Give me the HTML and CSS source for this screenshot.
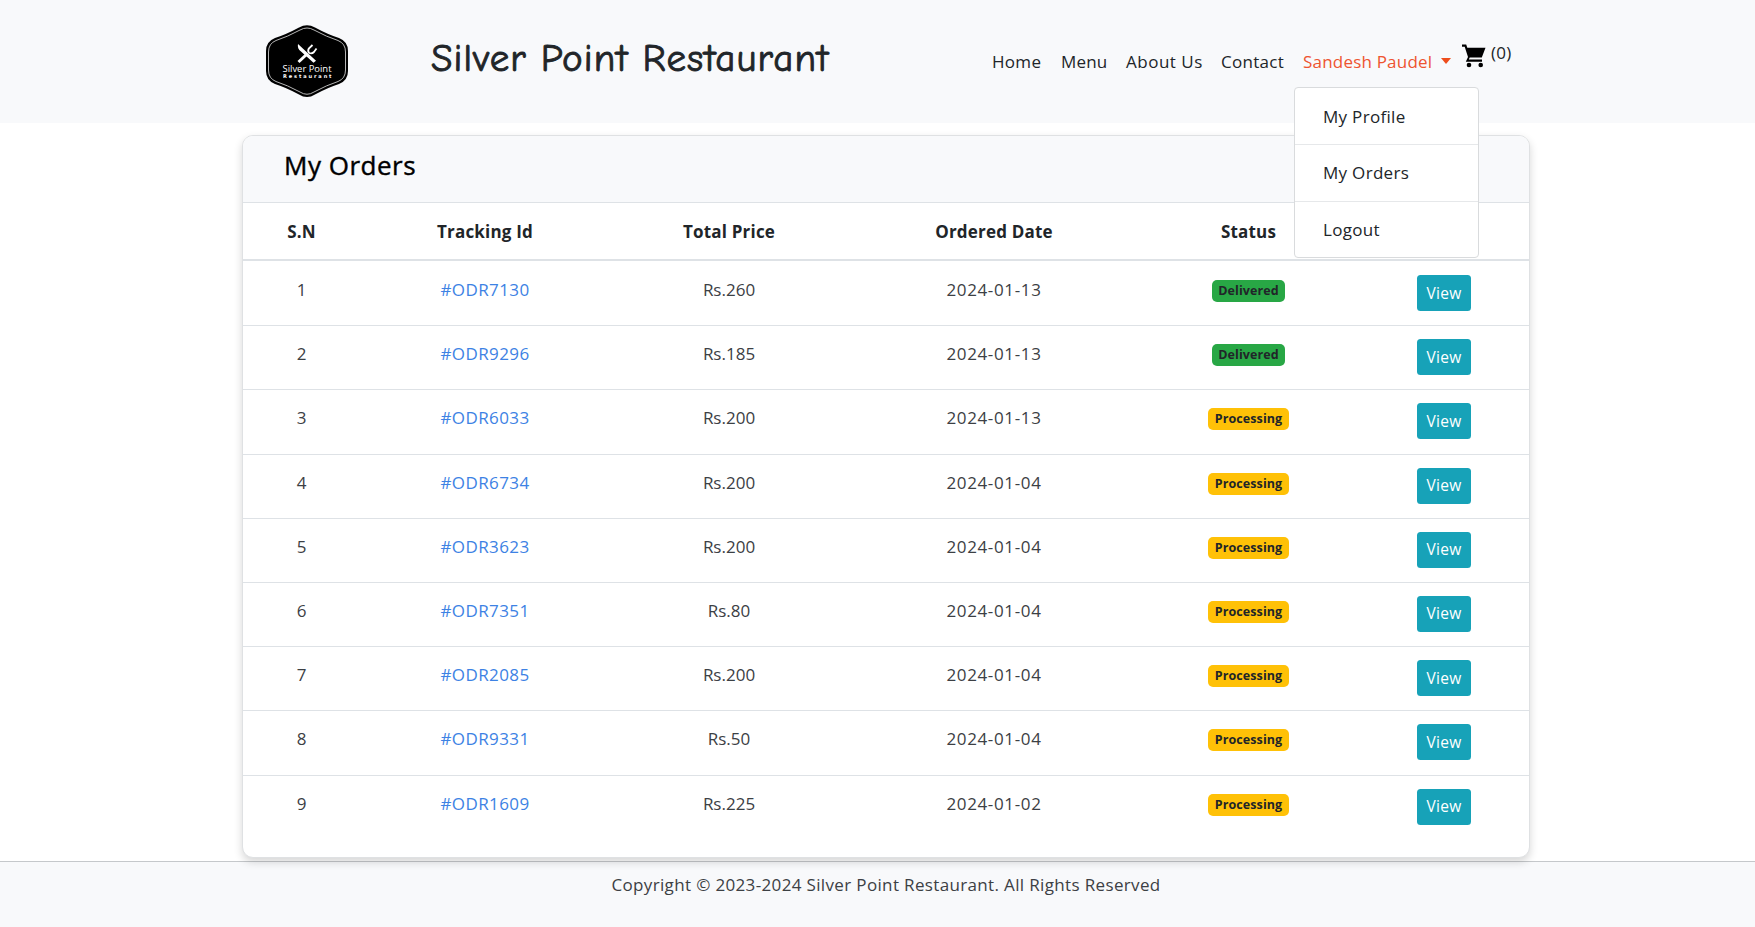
FILE: index.html
```html
<!DOCTYPE html>
<html lang="en">
<head>
<meta charset="utf-8">
<title>My Orders - Silver Point Restaurant</title>
<link rel="stylesheet" href="styles.css">
</head>
<body>
<header class="site-header">
  <a class="logo" href="#">
    <svg width="82" height="72" viewBox="0 0 82 72">
      <path d="M33 2.500Q41 -2 49 2.500Q62 9.500 73 13Q82 16.500 82 26V46Q82 55.500 73 59Q62 62.500 49 69.500Q41 74.500 33 69.500Q20 62.500 9 59Q0 55.500 0 46V26Q0 16.500 9 13Q20 9.500 33 2.500Z" fill="#000"/>
      <path d="M34 5Q41 1 48 5Q61 12 72 15.500Q79.500 18.500 79.500 27V45Q79.500 53.500 72 56.500Q61 60 48 67Q41 71.500 34 67Q21 60 10 56.500Q2.500 53.500 2.500 45V27Q2.500 18.500 10 15.500Q21 12 34 5Z" fill="none" stroke="#c9c9c9" stroke-width="0.900"/>
      <path d="M32 19Q31 23.500 35 26.500L47.500 37.800L50 35.700Z" fill="#fff"/>
      <path d="M32.500 37L40.500 29.500" stroke="#fff" stroke-width="3" fill="none"/>
      <path d="M46.500 20L42.800 23.500Q41.300 26.500 43.300 28Q46 29 48 27L50.500 23.500" stroke="#fff" stroke-width="1.800" fill="none"/>
      <text class="logo-name" x="16.500" y="47" textLength="49" lengthAdjust="spacingAndGlyphs">Silver Point</text>
      <text class="logo-sub" x="17" y="53.300" textLength="48.500" lengthAdjust="spacing">Restaurant</text>
    </svg>
  </a>
  <h1 class="brand">Silver Point Restaurant</h1>
  <nav class="nav">
    <a class="n-home" href="#">Home</a>
    <a class="n-menu" href="#">Menu</a>
    <a class="n-about" href="#">About Us</a>
    <a class="n-contact" href="#">Contact</a>
    <div class="account">
      <a class="user" href="#">Sandesh Paudel</a><i class="caret"></i>
      <div class="dropdown">
        <a href="#">My Profile</a>
        <a href="#">My Orders</a>
        <a href="#">Logout</a>
      </div>
    </div>
  </nav>
  <a class="cart" href="#">
    <svg width="24" height="24" viewBox="0 0 24 24">
      <path d="M0 0.500H4.200L5.300 3.700H23.500L19.800 13.500H7.700L6.800 15.600H20V17.800H3.800L6 13L2.700 2.800H0Z" fill="#000"/>
      <circle cx="7" cy="21" r="2.300"/><circle cx="18.700" cy="21" r="2.300"/>
    </svg>
    <span>(0)</span>
  </a>
</header>
<main class="card">
  <h2 class="card-title">My Orders</h2>
  <table class="orders">
    <colgroup><col class="c1"><col class="c2"><col class="c3"><col class="c4"><col class="c5"><col class="c6"></colgroup>
    <thead><tr><th>S.N</th><th>Tracking Id</th><th>Total Price</th><th>Ordered Date</th><th>Status</th><th></th></tr></thead>
    <tbody>
      <tr><td>1</td><td><a href="#">#ODR7130</a></td><td>Rs.260</td><td class="date">2024-01-13</td><td><span class="badge done">Delivered</span></td><td><button class="view">View</button></td></tr>
      <tr><td>2</td><td><a href="#">#ODR9296</a></td><td>Rs.185</td><td class="date">2024-01-13</td><td><span class="badge done">Delivered</span></td><td><button class="view">View</button></td></tr>
      <tr><td>3</td><td><a href="#">#ODR6033</a></td><td>Rs.200</td><td class="date">2024-01-13</td><td><span class="badge wait">Processing</span></td><td><button class="view">View</button></td></tr>
      <tr><td>4</td><td><a href="#">#ODR6734</a></td><td>Rs.200</td><td class="date">2024-01-04</td><td><span class="badge wait">Processing</span></td><td><button class="view">View</button></td></tr>
      <tr><td>5</td><td><a href="#">#ODR3623</a></td><td>Rs.200</td><td class="date">2024-01-04</td><td><span class="badge wait">Processing</span></td><td><button class="view">View</button></td></tr>
      <tr><td>6</td><td><a href="#">#ODR7351</a></td><td>Rs.80</td><td class="date">2024-01-04</td><td><span class="badge wait">Processing</span></td><td><button class="view">View</button></td></tr>
      <tr><td>7</td><td><a href="#">#ODR2085</a></td><td>Rs.200</td><td class="date">2024-01-04</td><td><span class="badge wait">Processing</span></td><td><button class="view">View</button></td></tr>
      <tr><td>8</td><td><a href="#">#ODR9331</a></td><td>Rs.50</td><td class="date">2024-01-04</td><td><span class="badge wait">Processing</span></td><td><button class="view">View</button></td></tr>
      <tr><td>9</td><td><a href="#">#ODR1609</a></td><td>Rs.225</td><td class="date">2024-01-02</td><td><span class="badge wait">Processing</span></td><td><button class="view">View</button></td></tr>
    </tbody>
  </table>
</main>
<footer class="footer">Copyright © 2023-2024 Silver Point Restaurant. All Rights Reserved</footer>
</body>
</html>
```
FILE: styles.css
```css
* { box-sizing: border-box; }
body {
  margin: 0;
  height: 927px;
  overflow: hidden;
  display: flex;
  flex-direction: column;
  background: #fff;
  color: #212529;
  font: 17px/27px "Segoe UI", "Open Sans", "Noto Sans", sans-serif;
}
a { color: inherit; text-decoration: none; }

.site-header {
  height: 123px;
  flex: none;
  display: flex;
  align-items: flex-start;
  padding-left: 266px;
  background: #f8f9fb;
}
.logo { width: 164px; padding-top: 25px; }
.logo svg { display: block; }
.logo-name { font: 9.500px "Open Sans", sans-serif; fill: #fff; }
.logo-sub { font: bold 5px "DejaVu Sans", sans-serif; fill: #fff; }
.brand {
  margin: 0;
  width: 562px;
  padding: 32px 0 0 1px;
  font: 400 39px/54px "Comic Sans MS", "Comic Neue", "Open Sans", sans-serif;
  letter-spacing: 1.050px;
  -webkit-text-stroke: .900px #212529;
  white-space: nowrap;
}
.nav { display: flex; padding-top: 48px; white-space: nowrap; letter-spacing: .300px; }
.n-home { width: 69px; }
.n-menu { width: 65px; letter-spacing: .150px; }
.n-about { width: 95px; letter-spacing: .500px; }
.n-contact { width: 82px; }
.account { position: relative; display: flex; width: 159px; color: #ee5430; letter-spacing: .200px; }
.user { width: 138px; }
.caret {
  margin-top: 10px;
  height: 6px;
  border: 5.500px solid transparent;
  border-top: 6px solid #ee4d1c;
  border-bottom: 0;
}
.dropdown {
  position: absolute;
  z-index: 2;
  top: 39px;
  left: -9px;
  width: 185px;
  height: 171px;
  border: 1px solid #d9dbdd;
  border-radius: 4px;
  background: #fff;
  color: #212529;
  letter-spacing: .300px;
}
.dropdown a { display: block; height: 56.500px; padding: 14px 0 0 28px; }
.dropdown a:first-child { height: 56px; padding-top: 15px; }
.dropdown a + a { border-top: 1px solid #e6e8ea; }
.cart { display: flex; padding-top: 44px; gap: 5px; }
.cart span { margin-top: -5px; letter-spacing: .300px; }

.card {
  position: relative;
  flex: none;
  width: 1288px;
  height: 723px;
  margin: 12px 0 0 242px;
  border: 1px solid #dfe1e3;
  border-radius: 11px;
  background: #fff;
  box-shadow: 0 4px 8px rgba(0, 0, 0, .16);
}
.card-title {
  margin: 0;
  height: 66px;
  padding: 12px 0 0 41px;
  border-radius: 10px 10px 0 0;
  background: #f8f9fb;
  color: #000;
  font-size: 26px;
  font-weight: 500;
  line-height: 34px;
  letter-spacing: .500px;
  -webkit-text-stroke: .400px #000;
}
.orders { width: 1286px; table-layout: fixed; border-collapse: separate; border-spacing: 0; text-align: center; }
.c1 { width: 117px; }
.c2 { width: 250px; }
.c3 { width: 238px; }
.c4 { width: 292px; }
.c5 { width: 217px; }
.c6 { width: 172px; }
.orders th {
  height: 59px;
  padding: 1px 0 0;
  border: 0 solid #dee2e6;
  border-top-width: 1.500px;
  border-bottom-width: 2px;
  font-weight: 700;
  letter-spacing: .200px;
}
.orders td { height: 64.200px; padding: 14px 0 0; vertical-align: top; color: #3c4044; line-height: 29px; }
.orders td:last-child { padding-left: 2px; }
.orders tr + tr td { border-top: 1px solid #dee2e6; padding-top: 13px; }
.orders td a { color: #3d82e4; letter-spacing: .400px; }
.orders .date { letter-spacing: .650px; }
.badge {
  display: inline-block;
  height: 22px;
  margin-top: 5px;
  border-radius: 5px;
  font-size: 12.500px;
  font-weight: 700;
  line-height: 22px;
  letter-spacing: .100px;
  vertical-align: top;
  color: #212529;
}
.done { width: 73px; background: #28a745; }
.wait { width: 81px; background: #ffc107; }
.view {
  display: inline-block;
  width: 54px;
  height: 36px;
  padding: 0;
  border: 0;
  border-radius: 3.500px;
  background: #17a2b8;
  color: #fff;
  font: 15.500px/35px "Segoe UI", "Open Sans", sans-serif;
  letter-spacing: .300px;
  vertical-align: top;
}
.footer {
  flex: 1;
  margin-top: 3px;
  padding: 9px 0 0 17px;
  border-top: 1px solid #c5c8cb;
  background: #f8f9fb;
  color: #3c4044;
  text-align: center;
  letter-spacing: .350px;
}
```
